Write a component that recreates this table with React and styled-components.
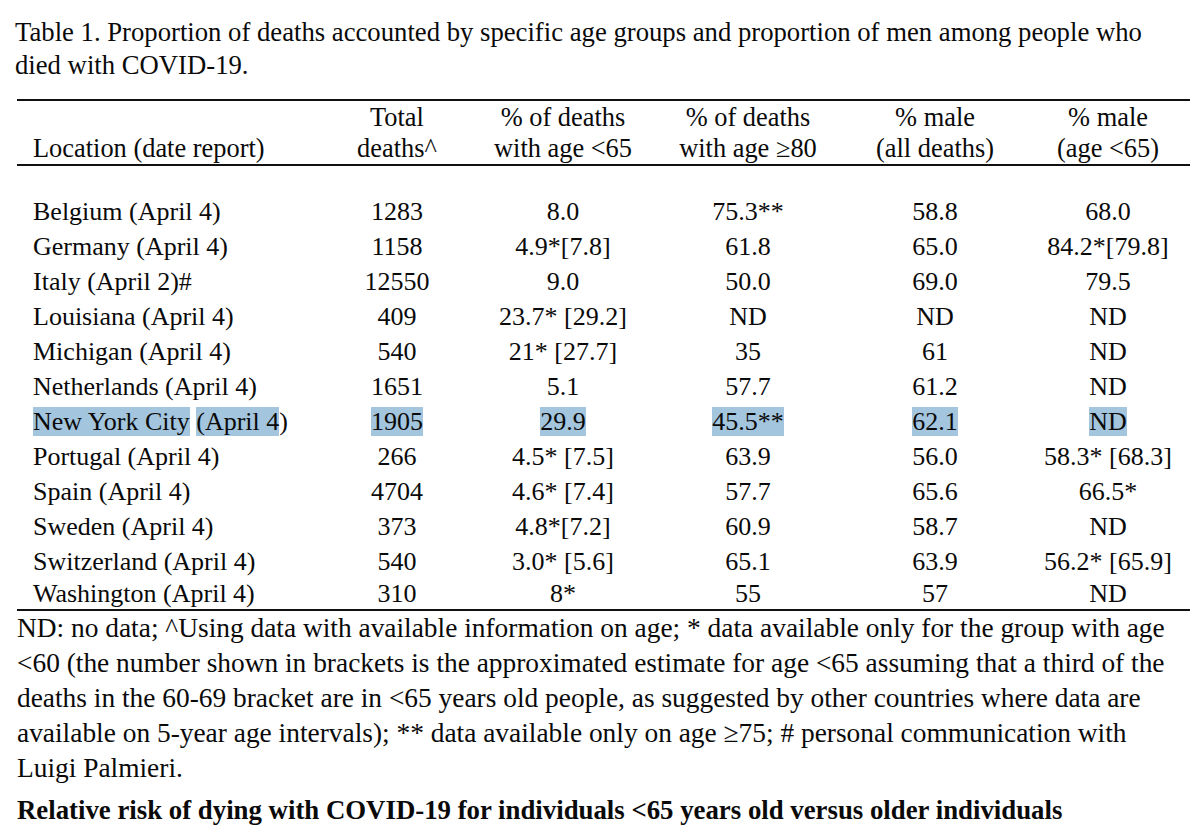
import * as React from 'react';
import styled, { createGlobalStyle } from 'styled-components';

const GlobalStyle = createGlobalStyle`
  html, body {
    margin: 0;
    padding: 0;
    background: #ffffff;
  }
  body {
    font-family: "Liberation Serif", "Times New Roman", serif;
    color: #0a0a0a;
  }
`;

const Page = styled.div`
  width: 1200px;
  height: 836px;
  overflow: hidden;
  padding: 16px 0 0 15px;
  box-sizing: border-box;
  font-size: 26px;
`;

const Caption = styled.p`
  margin: 0 0 17px 0;
  font-size: 26.7px;
  line-height: 33px;
  white-space: nowrap;
`;

const Table = styled.table`
  width: 1173px;
  margin-left: 2px;
  border-collapse: collapse;
  table-layout: fixed;
  border-top: 2px solid #111;
  border-bottom: 2px solid #111;
`;

const HeadCell = styled.th`
  font-weight: normal;
  font-size: 26.4px;
  line-height: 31px;
  padding: 1px 0 0 ${p => (p.$left ? '16px' : '0')};
  text-align: ${p => (p.$left ? 'left' : 'center')};
  vertical-align: bottom;
  border-bottom: 2px solid #111;
  white-space: nowrap;
`;

const Spacer = styled.tr`
  height: 29px;
`;

const Row = styled.tr`
  height: ${p => (p.$last ? '30px' : '35px')};
`;

const Cell = styled.td`
  padding: 0 0 0 ${p => (p.$left ? '16px' : '0')};
  text-align: ${p => (p.$left ? 'left' : 'center')};
  line-height: 30px;
  white-space: nowrap;
`;

const Mark = styled.span`
  background: #a3c5de;
`;

const Notes = styled.p`
  margin: 0 0 0 2px;
  font-size: 27.4px;
  line-height: 35px;
  white-space: nowrap;
`;

const Heading = styled.p`
  margin: 7px 0 0 2px;
  font-size: 26.8px;
  line-height: 35px;
  font-weight: bold;
  white-space: nowrap;
`;

const widths = [303, 154, 178, 192, 182, 164];

const rows = [
  ['Belgium (April 4)', '1283', '8.0', '75.3**', '58.8', '68.0'],
  ['Germany (April 4)', '1158', '4.9*[7.8]', '61.8', '65.0', '84.2*[79.8]'],
  ['Italy (April 2)#', '12550', '9.0', '50.0', '69.0', '79.5'],
  ['Louisiana (April 4)', '409', '23.7* [29.2]', 'ND', 'ND', 'ND'],
  ['Michigan (April 4)', '540', '21* [27.7]', '35', '61', 'ND'],
  ['Netherlands (April 4)', '1651', '5.1', '57.7', '61.2', 'ND'],
  ['NYC', '1905', '29.9', '45.5**', '62.1', 'ND'],
  ['Portugal (April 4)', '266', '4.5* [7.5]', '63.9', '56.0', '58.3* [68.3]'],
  ['Spain (April 4)', '4704', '4.6* [7.4]', '57.7', '65.6', '66.5*'],
  ['Sweden (April 4)', '373', '4.8*[7.2]', '60.9', '58.7', 'ND'],
  ['Switzerland (April 4)', '540', '3.0* [5.6]', '65.1', '63.9', '56.2* [65.9]'],
  ['Washington (April 4)', '310', '8*', '55', '57', 'ND'],
];

function LocationCell({ name }) {
  if (name === 'NYC') {
    return (
      <Cell $left>
        <Mark>New York City</Mark> <Mark>(April 4</Mark>)
      </Cell>
    );
  }
  return <Cell $left>{name}</Cell>;
}

export default function App() {
  return (
    <Page>
      <GlobalStyle />
      <Caption>
        Table 1. Proportion of deaths accounted by specific age groups and proportion of men among people who
        <br />
        died with COVID-19.
      </Caption>
      <Table>
        <colgroup>
          {widths.map((w, i) => <col key={i} style={{ width: w }} />)}
        </colgroup>
        <thead>
          <tr>
            <HeadCell $left>Location (date report)</HeadCell>
            <HeadCell>Total<br />deaths^</HeadCell>
            <HeadCell>% of deaths<br />with age &lt;65</HeadCell>
            <HeadCell>% of deaths<br />with age ≥80</HeadCell>
            <HeadCell>% male<br />(all deaths)</HeadCell>
            <HeadCell>% male<br />(age &lt;65)</HeadCell>
          </tr>
        </thead>
        <tbody>
          <Spacer><td colSpan={6} /></Spacer>
          {rows.map((r, i) => {
            const nyc = r[0] === 'NYC';
            return (
              <Row key={i} $last={i === rows.length - 1}>
                <LocationCell name={r[0]} />
                {r.slice(1).map((v, j) => (
                  <Cell key={j}>{nyc ? <Mark>{v}</Mark> : v}</Cell>
                ))}
              </Row>
            );
          })}
        </tbody>
      </Table>
      <Notes>
        ND: no data; ^Using data with available information on age; * data available only for the group with age
        <br />
        &lt;60 (the number shown in brackets is the approximated estimate for age &lt;65 assuming that a third of the
        <br />
        deaths in the 60-69 bracket are in &lt;65 years old people, as suggested by other countries where data are
        <br />
        available on 5-year age intervals); ** data available only on age ≥75; # personal communication with
        <br />
        Luigi Palmieri.
      </Notes>
      <Heading>
        Relative risk of dying with COVID-19 for individuals &lt;65 years old versus older individuals
      </Heading>
    </Page>
  );
}
